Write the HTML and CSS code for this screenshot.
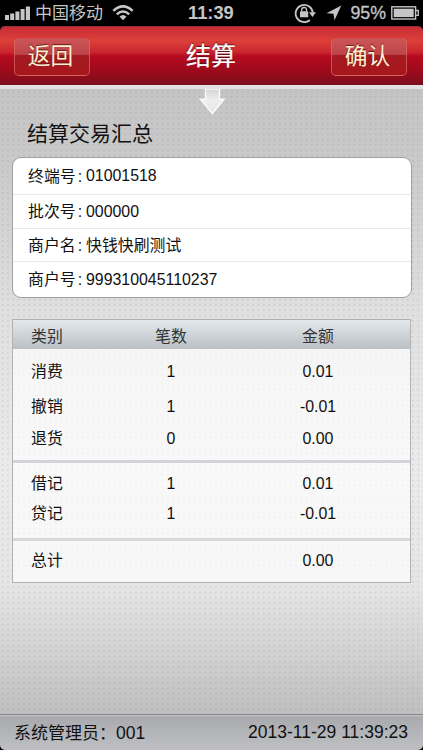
FILE: index.html
```html
<!DOCTYPE html>
<html lang="zh-CN">
<head>
<meta charset="utf-8">
<title>结算</title>
<link rel="stylesheet" href="styles.css">
</head>
<body>
<div class="screen">
  <div class="status">
    <div class="status-left">
      <svg class="signal" width="26" height="14" viewBox="0 0 26 14" fill="#c6c6c6"><rect x="0" y="9" width="4" height="5"/><rect x="5.2" y="7.5" width="4" height="6.5"/><rect x="10.4" y="5.5" width="4" height="8.5"/><rect x="15.6" y="3" width="4" height="11"/><rect x="20.8" y="0.5" width="4.2" height="13.5"/></svg>
      <span class="carrier">中国移动</span>
      <svg class="wifi" width="22" height="16" viewBox="0 0 22 16" fill="none" stroke="#c6c6c6" stroke-width="2.5"><path d="M1.3 5.8Q11-3.1 20.7 5.8"/><path d="M4.8 9.3Q11 3.6 17.2 9.3"/><path d="M7.5 11.4Q11 8.4 14.5 11.4L11 15.2Z" fill="#c6c6c6" stroke="none"/></svg>
    </div>
    <span class="clock">11:39</span>
    <div class="status-right">
      <svg class="lock" width="23" height="20" viewBox="0 0 23 20"><path d="M15.9 17A8.6 8.6 0 1 1 18.8 9.5" fill="none" stroke="#c6c6c6" stroke-width="1.8"/><path d="M15 9.3H22L18.5 14Z" fill="#c6c6c6"/><rect x="6" y="8.3" width="8.2" height="6" rx=".6" fill="#c6c6c6"/><path d="M7.7 8.5V6.8Q7.7 4.5 10.1 4.5T12.5 6.8V8.5" fill="none" stroke="#c6c6c6" stroke-width="1.3"/></svg>
      <svg class="nav-arrow" width="16" height="16" viewBox="0 0 16 16"><path d="M15.3.5L8.5 15.3 7.5 8.8.5 8.2Z" fill="#c6c6c6"/></svg>
      <span class="percent">95%</span>
      <svg class="battery" width="28" height="14" viewBox="0 0 28 14"><rect x=".8" y=".8" width="23.8" height="12.2" fill="none" stroke="#c6c6c6" stroke-width="1.4"/><rect x="2.7" y="2.7" width="20" height="8.4" fill="#c6c6c6"/><path d="M25 4.5H27.3V9.3H25" fill="none" stroke="#c6c6c6" stroke-width="1.3"/></svg>
    </div>
  </div>
  <header class="navbar">
    <span class="btn">返回</span>
    <h1>结算</h1>
    <span class="btn">确认</span>
  </header>
  <main class="content">
    <svg class="down" width="28" height="27" viewBox="0 0 28 27"><defs><linearGradient id="g" x2="0" y2="1"><stop offset="0" stop-color="#d4d4d4"/><stop offset=".45" stop-color="#eee"/><stop offset="1" stop-color="#e6e6e6"/></linearGradient></defs><path d="M7.5 0H21.5V10.3H26L14.3 24.5 2.5 10.3H7.5Z" fill="url(#g)" stroke="#fafafa" stroke-width="1.5"/></svg>
    <h2>结算交易汇总</h2>
    <section class="card">
      <div class="info r1"><span class="label">终端号<span class="colon">:</span></span><span>01001518</span></div>
      <div class="info r2"><span class="label">批次号<span class="colon">:</span></span><span>000000</span></div>
      <div class="info r3"><span class="label">商户名<span class="colon">:</span></span><span class="name">快钱快刷测试</span></div>
      <div class="info r4"><span class="label">商户号<span class="colon">:</span></span><span>999310045110237</span></div>
    </section>
    <section class="table">
      <div class="row head"><span>类别</span><span>笔数</span><span>金额</span></div>
      <div class="group first">
        <div class="row tall"><span>消费</span><span>1</span><span>0.01</span></div>
        <div class="row mid"><span>撤销</span><span>1</span><span>-0.01</span></div>
        <div class="row"><span>退货</span><span>0</span><span>0.00</span></div>
      </div>
      <div class="group second">
        <div class="row"><span>借记</span><span>1</span><span>0.01</span></div>
        <div class="row"><span>贷记</span><span>1</span><span>-0.01</span></div>
      </div>
      <div class="group total">
        <div class="row"><span>总计</span><span></span><span>0.00</span></div>
      </div>
    </section>
  </main>
  <footer class="footer"><span class="admin">系统管理员：<span class="operator">001</span></span><span class="time">2013-11-29 11:39:23</span></footer>
</div>
</body>
</html>
```
FILE: styles.css
```css
* { box-sizing: border-box; }
body { margin: 0; background: #000; }
.screen {
  width: 423px; height: 750px; overflow: hidden;
  display: flex; flex-direction: column;
  font-family: "Liberation Sans", "Noto Sans CJK SC", sans-serif;
  font-size: 15.9px; color: #111; background: #000;
}
.status {
  height: 26px; flex: none; padding: 0 4px 0 5px;
  display: grid; grid-template-columns: 183px auto 1fr; align-items: center;
  color: #c6c6c6;
}
.status-left, .status-right { display: flex; align-items: center; }
.status-right { justify-content: flex-end; }
.carrier { font-size: 17px; line-height: 24px; margin-left: 4px; padding-top: 2px; }
.wifi { margin-left: 9px; }
.clock { font-weight: bold; font-size: 18.3px; }
.nav-arrow { margin: 0 8px 0 9px; }
.percent { font-size: 17.8px; -webkit-text-stroke: .3px #c6c6c6; }
.battery { margin-left: 5px; }
.navbar {
  height: 59px; flex: none; padding: 11px 16px 10px 14px;
  display: flex; align-items: flex-start; justify-content: space-between;
  border-top: 1px solid #963039; border-radius: 5px 5px 0 0;
  background: linear-gradient(#c92b35 0, #dc4039 24%, #cb2630 43%, #b70b20 50%, #a30a1c 70%, #7d0d1c 100%);
}
.btn {
  width: 76px; height: 38px; border: 1px solid rgba(222, 110, 105, .65); border-radius: 5px; padding-right: 3px;
  text-align: center; font-size: 22.7px; line-height: 34px; color: #fff0d0;
  text-shadow: 0 -1px 1px #6d1515;
  background: linear-gradient(#cc5558 0, #bd4549 43%, #a31b21 44%, #a8161d 100%);
}
.navbar h1 {
  margin: 0; padding-left: 1px; font-size: 25px; line-height: 36px; font-weight: 400; color: #fff;
  text-shadow: 0 -1px 1px #5a0b16; -webkit-text-stroke: .2px #fff;
}
.content {
  position: relative; height: 629px; flex: none; padding: 36px 11px 0 12px;
  border-top: 4px solid #e3e1e4;
  background:
    radial-gradient(circle, rgba(100, 100, 100, .13) 0 .8px, transparent 1.4px) 0 0 / 5.33px 5.33px,
    linear-gradient(#c4c4c4 0, #cacaca 12%, #e0e0e0 36%, #ebebeb 62%, #e5e5e5 80%, #bfbfbf 100%);
}
.down { position: absolute; left: 198px; top: 0; }
.content h2 { margin: 0 0 0 15px; font-size: 21px; line-height: 17px; height: 32px; font-weight: 400; }
.card { width: 400px; height: 141px; border: 1px solid #a0a0a0; border-radius: 9px; background: #fff; overflow: hidden; }
.info { display: flex; align-items: center; padding-left: 15px; }
.info + .info { border-top: 1px solid #e8e8e8; }
.label { width: 58px; white-space: nowrap; padding-bottom: 2px; }
.name { padding-bottom: 2px; }
.colon { margin-left: 2px; }
.r1 { height: 36px; }
.r2 { height: 34px; }
.r3 { height: 33px; }
.r4 { height: 36px; }
.table {
  width: 399px; height: 264px; margin-top: 21px;
  border: 1px solid #afb3b6; background: rgba(255, 255, 255, .67);
}
.row {
  display: grid; grid-template-columns: 61px 158px 136px; align-items: center;
  padding-left: 18px; height: 30px;
}
.row span:nth-child(1) { padding-bottom: 3px; }
.row span:nth-child(2) { text-align: center; }
.row span:nth-child(3) { text-align: center; }
.head { height: 29px; padding-top: 1px; background: linear-gradient(#e2e8ec, #bac0c4); color: #333; }
.row.head span { padding-bottom: 0; }
.first { height: 114px; padding-top: 5px; border-bottom: 3px solid #d2d4d9; }
.tall { height: 36px; }
.mid { height: 34px; }
.second { height: 78px; padding-top: 6px; border-bottom: 3px solid #d6d8dc; }
.total { padding-top: 5px; }
.footer {
  height: 36px; flex: none; padding: 0 15px 0 14px;
  display: flex; align-items: center; justify-content: space-between;
  font-size: 17px; border-top: 1px solid #858589; border-radius: 0 0 5px 5px;
  background: linear-gradient(#c8c8ca 0, #a9aaae 6%, #bec0c3 100%);
}
.admin { padding-bottom: 2px; }
.operator, .time { font-size: 17.5px; }
```
